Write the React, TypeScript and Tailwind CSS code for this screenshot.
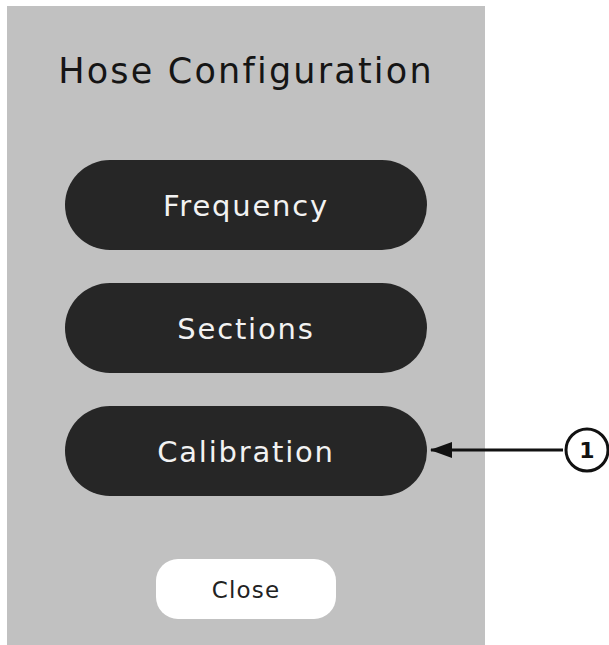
import React from "react";

const MenuButton = ({ label }: { label: string }) => (
  <button className="w-[362px] h-[90px] pt-[3px] rounded-full bg-[#262626] text-[#f2f2f2] text-[29px] tracking-[1.8px]">
    {label}
  </button>
);

const App = () => {
  return (
    <div
      className="w-[609px] h-[645px] bg-white flex"
      style={{ fontFamily: '"DejaVu Sans", "Open Sans", sans-serif' }}
    >
      <div className="ml-[7px] mt-[6px] w-[478px] h-[639px] bg-[#c1c1c1] flex flex-col items-center">
        <h1 className="mt-[38px] text-[35px] text-[#151515] tracking-[2.2px] leading-[54px]">
          Hose Configuration
        </h1>
        <div className="mt-[62px] flex flex-col gap-[33px]">
          <MenuButton label="Frequency" />
          <MenuButton label="Sections" />
          <MenuButton label="Calibration" />
        </div>
        <button className="mt-[63px] w-[180px] h-[60px] pt-[3px] rounded-[22px] bg-white text-[23px] tracking-[1.2px] text-[#222]">
          Close
        </button>
      </div>
      <div className="relative flex-1">
        <svg className="absolute left-[-60px] top-[420px] overflow-visible" width="184" height="60" viewBox="0 0 184 60">
          <line x1="6" y1="30" x2="138" y2="30" stroke="#111" strokeWidth="3" />
          <polygon points="5,30 27,22 27,38" fill="#111" />
          <circle cx="162" cy="30" r="21" fill="white" stroke="#111" strokeWidth="3" />
          <text x="162" y="38" textAnchor="middle" fontSize="22" fontWeight="700" fill="#111" fontFamily="DejaVu Sans, sans-serif">
            1
          </text>
        </svg>
      </div>
    </div>
  );
};

export default App;
